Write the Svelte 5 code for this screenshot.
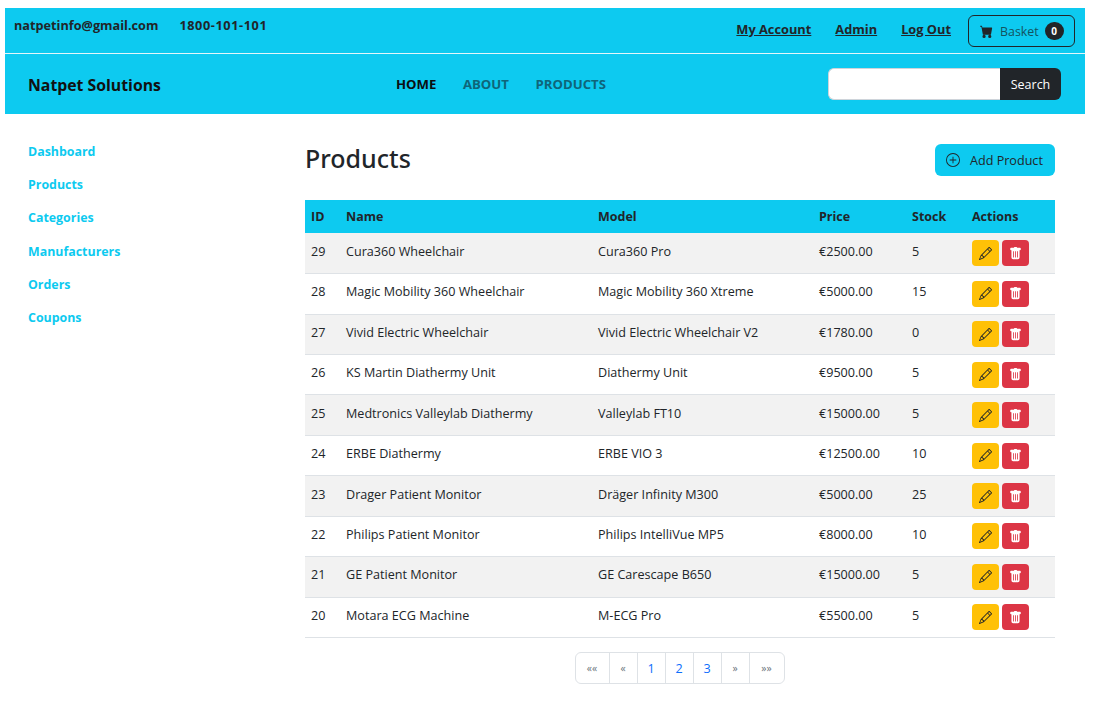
<script>
  const products = [
    { id: 29, name: 'Cura360 Wheelchair', model: 'Cura360 Pro', price: '2500.00', stock: 5 },
    { id: 28, name: 'Magic Mobility 360 Wheelchair', model: 'Magic Mobility 360 Xtreme', price: '5000.00', stock: 15 },
    { id: 27, name: 'Vivid Electric Wheelchair', model: 'Vivid Electric Wheelchair V2', price: '1780.00', stock: 0 },
    { id: 26, name: 'KS Martin Diathermy Unit', model: 'Diathermy Unit', price: '9500.00', stock: 5 },
    { id: 25, name: 'Medtronics Valleylab Diathermy', model: 'Valleylab FT10', price: '15000.00', stock: 5 },
    { id: 24, name: 'ERBE Diathermy', model: 'ERBE VIO 3', price: '12500.00', stock: 10 },
    { id: 23, name: 'Drager Patient Monitor', model: 'Dräger Infinity M300', price: '5000.00', stock: 25 },
    { id: 22, name: 'Philips Patient Monitor', model: 'Philips IntelliVue MP5', price: '8000.00', stock: 10 },
    { id: 21, name: 'GE Patient Monitor', model: 'GE Carescape B650', price: '15000.00', stock: 5 },
    { id: 20, name: 'Motara ECG Machine', model: 'M-ECG Pro', price: '5500.00', stock: 5 }
  ];
  const sideLinks = ['Dashboard', 'Products', 'Categories', 'Manufacturers', 'Orders', 'Coupons'];
  const pages = [
    { label: '««', muted: true },
    { label: '«', muted: true },
    { label: '1' },
    { label: '2' },
    { label: '3' },
    { label: '»', muted: true },
    { label: '»»', muted: true }
  ];
</script>

<div class="page">
  <header class="header">
    <div class="topbar">
      <div class="contact">
        <span>natpetinfo@gmail.com</span>
        <span class="phone">1800-101-101</span>
      </div>
      <div class="account">
        <a href="#account">My Account</a>
        <a href="#admin">Admin</a>
        <a href="#logout">Log Out</a>
        <button class="basket">
          <svg width="13" height="13" viewBox="0 0 16 16" fill="currentColor"><path d="M0 1.5A.5.5 0 0 1 .5 1H2a.5.5 0 0 1 .485.379L2.89 3H14.5a.5.5 0 0 1 .491.592l-1.5 8A.5.5 0 0 1 13 12H4a.5.5 0 0 1-.491-.408L2.01 3.607 1.61 2H.5a.5.5 0 0 1-.5-.5zM5 12a2 2 0 1 0 0 4 2 2 0 0 0 0-4zm7 0a2 2 0 1 0 0 4 2 2 0 0 0 0-4z"/></svg>
          <span>Basket</span>
          <span class="count">0</span>
        </button>
      </div>
    </div>
    <nav class="navbar">
      <span class="brand">Natpet Solutions</span>
      <div class="navlinks">
        <a class="active" href="#home">HOME</a>
        <a href="#about">ABOUT</a>
        <a href="#products">PRODUCTS</a>
      </div>
      <form class="search" onsubmit={(e) => e.preventDefault()}>
        <input type="text" aria-label="Search" />
        <button>Search</button>
      </form>
    </nav>
  </header>

  <div class="content">
    <aside class="sidebar">
      {#each sideLinks as link}
        <a href="#side">{link}</a>
      {/each}
    </aside>
    <main class="main">
      <div class="title-row">
        <h1>Products</h1>
        <button class="add">
          <svg width="14" height="14" viewBox="0 0 16 16" fill="currentColor"><path d="M8 15A7 7 0 1 1 8 1a7 7 0 0 1 0 14zm0 1A8 8 0 1 0 8 0a8 8 0 0 0 0 16z"/><path d="M8 4a.5.5 0 0 1 .5.5v3h3a.5.5 0 0 1 0 1h-3v3a.5.5 0 0 1-1 0v-3h-3a.5.5 0 0 1 0-1h3v-3A.5.5 0 0 1 8 4z"/></svg>
          <span>Add Product</span>
        </button>
      </div>
      <table>
        <thead>
          <tr>
            <th class="c-id">ID</th>
            <th class="c-name">Name</th>
            <th class="c-model">Model</th>
            <th class="c-price">Price</th>
            <th class="c-stock">Stock</th>
            <th>Actions</th>
          </tr>
        </thead>
        <tbody>
          {#each products as p}
            <tr>
              <td>{p.id}</td>
              <td>{p.name}</td>
              <td>{p.model}</td>
              <td>€{p.price}</td>
              <td>{p.stock}</td>
              <td>
                <div class="actions">
                  <button class="edit" aria-label="Edit">
                    <svg width="13" height="13" viewBox="0 0 16 16" fill="currentColor"><path d="M12.146.146a.5.5 0 0 1 .708 0l3 3a.5.5 0 0 1 0 .708l-10 10a.5.5 0 0 1-.168.11l-5 2a.5.5 0 0 1-.65-.65l2-5a.5.5 0 0 1 .11-.168l10-10zM11.207 2.5 13.5 4.793 14.793 3.5 12.5 1.207 11.207 2.5zm1.586 3L10.5 3.207 4 9.707V10h.5a.5.5 0 0 1 .5.5v.5h.5a.5.5 0 0 1 .5.5v.5h.293l6.5-6.5zm-9.761 5.175-.106.106-1.528 3.821 3.821-1.528.106-.106A.5.5 0 0 1 5 12.5V12h-.5a.5.5 0 0 1-.5-.5V11h-.5a.5.5 0 0 1-.468-.325z"/></svg>
                  </button>
                  <button class="delete" aria-label="Delete">
                    <svg width="13" height="13" viewBox="0 0 16 16" fill="currentColor"><path d="M2.5 1a1 1 0 0 0-1 1v1a1 1 0 0 0 1 1H3v9a2 2 0 0 0 2 2h6a2 2 0 0 0 2-2V4h.5a1 1 0 0 0 1-1V2a1 1 0 0 0-1-1H10a1 1 0 0 0-1-1H7a1 1 0 0 0-1 1H2.5zm3 4a.5.5 0 0 1 .5.5v7a.5.5 0 0 1-1 0v-7a.5.5 0 0 1 .5-.5zM8 5a.5.5 0 0 1 .5.5v7a.5.5 0 0 1-1 0v-7A.5.5 0 0 1 8 5zm3 .5v7a.5.5 0 0 1-1 0v-7a.5.5 0 0 1 1 0z"/></svg>
                  </button>
                </div>
              </td>
            </tr>
          {/each}
        </tbody>
      </table>
      <div class="pagination">
        {#each pages as pg}
          <a href="#page" class:muted={pg.muted}>{pg.label}</a>
        {/each}
      </div>
    </main>
  </div>
</div>

<style>
  :global(body) {
    margin: 0;
    background: #fff;
    color: #212529;
    font-family: "Open Sans", "Noto Sans", sans-serif;
    font-size: 12.6px;
  }
  .page {
    padding: 8px 13px 0 5px;
  }
  a {
    text-decoration: none;
  }
  button {
    font-family: inherit;
    cursor: pointer;
  }
  .header {
    background: #0dcaf0;
  }
  .topbar {
    height: 45px;
    display: flex;
    justify-content: space-between;
    border-bottom: 1px solid #e4f6fb;
  }
  .contact {
    display: flex;
    gap: 21px;
    padding: 9px 0 0 9px;
    font-weight: 700;
    font-size: 12.7px;
    line-height: 17px;
  }
  .phone {
    letter-spacing: 0.6px;
  }
  .account {
    display: flex;
    align-items: flex-start;
    padding: 7px 10px 0 0;
  }
  .account a {
    color: #212529;
    font-weight: 700;
    font-size: 12.8px;
    text-decoration: underline;
    margin: 6px 24px 0 0;
    line-height: 17px;
  }
  .account a:nth-of-type(3) {
    margin-right: 17px;
  }
  .basket {
    width: 107px;
    height: 32px;
    display: flex;
    align-items: center;
    padding: 0 0 0 11px;
    background: transparent;
    border: 1px solid #212529;
    border-radius: 6px;
    color: #212529;
    font-size: 12.4px;
  }
  .basket span:nth-of-type(1) {
    margin-left: 7px;
    color: #14535f;
  }
  .count {
    margin-left: 6px;
    width: 19px;
    height: 18px;
    border-radius: 9px;
    background: #212529;
    color: #fff;
    font-size: 10px;
    font-weight: 700;
    line-height: 18px;
    text-align: center;
  }
  .navbar {
    height: 60px;
    display: flex;
    align-items: center;
    padding: 0 24px 0 23px;
  }
  .brand {
    width: 368px;
    padding-top: 1px;
    font-size: 15.8px;
    font-weight: 700;
    color: #111;
  }
  .navlinks {
    flex: 1;
    display: flex;
    gap: 26.5px;
    font-size: 13.2px;
    font-weight: 700;
  }
  .navlinks a {
    color: #0f6579;
  }
  .navlinks a.active {
    color: #0b0f12;
  }
  .search {
    display: flex;
    height: 32px;
  }
  .search input {
    width: 172px;
    padding: 0;
    box-sizing: border-box;
    background: #fff;
    border: 1px solid #ced4da;
    border-right: none;
    border-radius: 6px 0 0 6px;
    outline: none;
  }
  .search button {
    width: 61px;
    background: #212529;
    color: #fff;
    border: none;
    border-radius: 0 6px 6px 0;
    font-size: 12.5px;
  }
  .content {
    display: flex;
  }
  .sidebar {
    width: 277px;
    padding: 29px 0 0 23px;
    display: flex;
    flex-direction: column;
    gap: 15.8px;
  }
  .sidebar a {
    color: #0dcaf0;
    font-weight: 700;
    font-size: 12.4px;
    line-height: 17.4px;
  }
  .main {
    width: 750px;
  }
  .title-row {
    height: 86px;
    display: flex;
    justify-content: space-between;
    align-items: flex-start;
  }
  h1 {
    margin: 26px 0 0;
    font-family: "Noto Sans", sans-serif;
    font-size: 25px;
    font-weight: 500;
    line-height: 36px;
  }
  .add {
    margin-top: 30px;
    width: 120px;
    height: 32px;
    display: flex;
    align-items: center;
    gap: 10px;
    padding: 0 0 0 11px;
    background: #0dcaf0;
    border: none;
    border-radius: 6px;
    color: #212529;
    font-size: 12.6px;
  }
  table {
    width: 750px;
    border-collapse: collapse;
    table-layout: fixed;
  }
  th {
    height: 33.2px;
    padding: 0 6px;
    background: #0dcaf0;
    text-align: left;
    font-size: 12.5px;
    font-weight: 700;
  }
  .c-id { width: 23px; }
  .c-name { width: 240px; }
  .c-model { width: 209px; }
  .c-price { width: 81px; }
  .c-stock { width: 48px; }
  td {
    height: 40.44px;
    box-sizing: border-box;
    padding: 0 6px 4px;
    border-bottom: 1px solid #dee2e6;
    white-space: nowrap;
  }
  tbody tr:nth-child(odd) td {
    background: #f2f2f2;
  }
  .actions {
    display: flex;
    gap: 3px;
    padding-top: 4px;
  }
  .actions button {
    width: 27px;
    height: 26px;
    display: flex;
    align-items: center;
    justify-content: center;
    padding: 0;
    border: none;
    border-radius: 4px;
  }
  .edit {
    background: #ffc107;
    color: #212529;
  }
  .delete {
    background: #dc3545;
    color: #fff;
  }
  .pagination {
    display: flex;
    justify-content: center;
    margin-top: 14px;
  }
  .pagination a {
    box-sizing: border-box;
    height: 32px;
    width: 29px;
    display: flex;
    align-items: center;
    justify-content: center;
    border: 1px solid #dee2e6;
    margin-left: -1px;
    color: #0d6efd;
    font-size: 12.6px;
  }
  .pagination a:first-child {
    border-radius: 6px 0 0 6px;
    width: 35px;
  }
  .pagination a:last-child {
    border-radius: 0 6px 6px 0;
    width: 36px;
  }
  .pagination a.muted {
    color: #6c757d;
    font-size: 10.5px;
  }
</style>
